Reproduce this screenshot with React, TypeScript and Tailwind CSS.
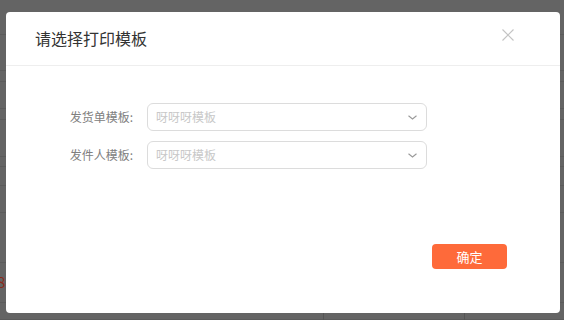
const bgRows = [35, 36, 11, 27, 11, 37, 10, 19, 27, 50, 40, 17];

function Chevron() {
  return (
    <svg width="9" height="5" viewBox="0 0 9 5" fill="none" className="text-[#999]">
      <path d="M0.5 0.8 L4.5 4 L8.5 0.8" stroke="currentColor" strokeWidth="1.1" />
    </svg>
  );
}

function SelectRow({ label, placeholder }: { label: string; placeholder: string }) {
  return (
    <div className="flex items-center">
      <label className="w-[127px] text-right text-[12px] text-[#808080]">{label}</label>
      <div className="ml-[14px] w-[280px] h-[28px] rounded-[6px] border border-[#dcdcdc] flex items-center justify-between pl-[8px] pr-[9px]">
        <span className="text-[12px] text-[#c8c8c8]">{placeholder}</span>
        <Chevron />
      </div>
    </div>
  );
}

export default function App() {
  return (
    <div
      className="relative w-[564px] h-[320px] overflow-hidden bg-[#646464]"
      style={{ fontFamily: '"Noto Sans CJK SC", "Noto Sans", sans-serif' }}
    >
      {/* dimmed page behind the dialog */}
      <div className="flex flex-col">
        {bgRows.map((h, i) => (
          <div key={i} className="border-b border-[#5b5b5b]" style={{ height: h }} />
        ))}
      </div>
      <div className="absolute left-0 top-[274px] text-[15px] leading-none text-[#8a2a1a] -translate-x-[3px]">8</div>
      <div className="absolute left-[323px] top-[300px] w-px h-[20px] bg-[#555]" />
      <div className="absolute left-[464px] top-[300px] w-px h-[20px] bg-[#555]" />

      <div className="absolute inset-0 pl-[6px] pt-[12px]">
        <div className="w-[554px] h-[301px] bg-white rounded-[4px] flex flex-col">
          <div className="h-[54px] border-b border-[#eeeeee] flex items-center justify-between pl-[29px] pr-[46px] pb-[1px]">
            <h2 className="text-[16px] text-[#333] leading-none">请选择打印模板</h2>
            <svg width="12" height="12" viewBox="0 0 12 12" className="-mt-[6px]">
              <path d="M0.5 0.5 L11.5 11.5 M11.5 0.5 L0.5 11.5" stroke="#c4c4c4" strokeWidth="1.2" />
            </svg>
          </div>
          <div className="pt-[37px] flex flex-col gap-[10px]">
            <SelectRow label="发货单模板:" placeholder="呀呀呀模板" />
            <SelectRow label="发件人模板:" placeholder="呀呀呀模板" />
          </div>
          <div className="flex justify-end pr-[53px] mt-[75px]">
            <button className="w-[75px] h-[25px] rounded-[4px] bg-[#fe6a3a] text-white text-[13px]">确定</button>
          </div>
        </div>
      </div>
    </div>
  );
}
